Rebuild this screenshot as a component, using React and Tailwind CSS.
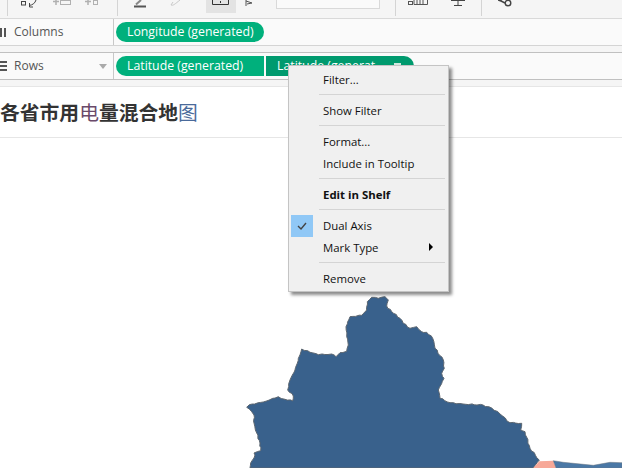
import React from "react";

const MAP_POINTS = [
  [250, 468], [250.7, 463], [254, 458], [255, 455], [254, 453], [260.7, 450.7], [260, 443], [256.7, 433], [254, 423], [254, 415],
  [251.7, 411.7], [246.7, 407.3], [249.3, 404.7], [263.3, 402], [278.3, 396.7], [285, 399.3], [292.7, 401], [293.3, 396], [287.7, 390], [290, 380],
  [295, 370], [301.7, 349], [310, 352.3], [318.3, 354.7], [331.7, 354], [336, 356.7], [340, 352.7], [346.7, 351.3], [348.3, 345], [346.7, 336.7],
  [346, 326.7], [350, 316.7], [361.7, 315.3], [366.7, 310], [367.3, 301.7], [371.7, 297.3], [378.3, 298.3], [385, 296.7], [388.3, 300], [386.7, 306],
  [391.7, 311.7], [400, 318.3], [403.3, 323.3], [410, 328.3], [416.7, 326.7], [421.7, 331.7], [426.7, 332.3], [432.7, 338.3], [435, 348.3], [443.3, 360],
  [444.3, 368.3], [441.7, 373.3], [444, 378.3], [438.3, 390], [440, 398.3], [450, 402.7], [463, 404], [483, 405], [491.7, 408], [500, 414],
  [510, 422.7], [521.7, 423.3], [520.7, 430], [525, 431.7], [530, 448.3], [539.3, 460], [533, 468],
];

// border on the map is rough, break long segments up with a small wobble
const roughen = (points) => {
  let d = `M${points[0][0]} ${points[0][1]}`;
  points.slice(1).forEach(([x, y], i) => {
    const [px, py] = points[i];
    const steps = Math.max(1, Math.round(Math.hypot(x - px, y - py) / 3));
    for (let s = 1; s <= steps; s++) {
      const wobble = s === steps ? 0 : Math.sin((i + 1) * 7.3 + s * 2.1) * 0.5;
      d += `L${(px + ((x - px) * s) / steps + wobble).toFixed(1)} ${(py + ((y - py) * s) / steps - wobble).toFixed(1)}`;
    }
  });
  return d + "Z";
};

const Pill = ({ children, className }) => (
  <div className={`flex h-5 w-[148px] items-center text-[12.3px] text-white ${className}`}>{children}</div>
);

const MenuItem = ({ label, bold, checked, submenu }) => (
  <div className={`relative flex h-[22px] items-center pl-[34px] text-[11.4px] text-[#111] ${bold ? "font-bold" : ""}`}>
    {checked && (
      <div className="absolute left-[2px] top-0 flex h-[22px] w-[22px] items-center justify-center bg-[#90c8f6]">
        <svg width="10" height="8" viewBox="0 0 10 8" fill="none" stroke="#444" strokeWidth="1.4">
          <path d="M1 4l3 3 5-6" />
        </svg>
      </div>
    )}
    {label}
    {submenu && <div className="absolute right-[15px] top-[6px] h-0 w-0 border-y-[4px] border-l-[4px] border-y-transparent border-l-black" />}
  </div>
);

const Separator = () => <div className="mb-[5px] ml-[30px] mr-[3px] mt-[3px] h-px bg-[#d4d4d4]" />;

const ToolbarDivider = ({ className }) => <div className={`h-4 w-px bg-[#d4d4d4] ${className}`} />;

export default function App() {
  return (
    <div className="relative h-[468px] w-[622px] overflow-hidden bg-white font-['Open_Sans',sans-serif]">
      {/* toolbar, cut off by the top edge */}
      <div className="flex h-[19px] overflow-hidden border-b border-[#d9d9d9] bg-[#f5f5f5]">
        <ToolbarDivider className="ml-[7px]" />
        <svg className="ml-[13px] shrink-0" width="16" height="9" viewBox="0 0 16 9" fill="none" stroke="#444">
          <rect x="0.5" y="1.5" width="4" height="3.5" />
          <path d="M15 0c-1 3-3 5-7 5.500M8.500 3v4h3.500" />
        </svg>
        <svg className="ml-[16px] shrink-0" width="18" height="6" viewBox="0 0 18 6" fill="none" stroke="#b0b0b0">
          <path d="M0 1.500h6M3 0v5" strokeWidth="1.500" />
          <rect x="7.500" y="0.500" width="10" height="4" />
        </svg>
        <svg className="ml-[14px] shrink-0" width="13" height="6" viewBox="0 0 13 6" fill="none" stroke="#b0b0b0">
          <path d="M0 1.500h6M3 0v5" strokeWidth="1.500" />
          <rect x="8.500" y="0.500" width="4" height="4" />
        </svg>
        <ToolbarDivider className="ml-[19px]" />
        <svg className="ml-[16px] shrink-0" width="13" height="8" viewBox="0 0 13 8" fill="none" stroke="#555">
          <path d="M2 4.500l5-4.500" strokeWidth="2" stroke="#888" />
          <path d="M0 6.500h12" strokeWidth="2" />
        </svg>
        <svg className="ml-[23px] shrink-0" width="11" height="6" viewBox="0 0 11 6" fill="none" stroke="#c8c8c8">
          <path d="M1 5c2 1 4-1 9-5M1 5l2-3" />
        </svg>
        <div className="ml-[25px] flex h-[13px] w-[30px] shrink-0 justify-center bg-[#e3e3e3]">
          <svg width="18" height="6" viewBox="0 0 18 6" fill="none" stroke="#333">
            <path d="M.5 0v4.500h16V0M8.500 1v2" />
          </svg>
        </div>
        <svg className="ml-[9px] shrink-0" width="8" height="6" viewBox="0 0 8 6" fill="none" stroke="#555">
          <path d="M1 6V0M1 1l6 2-5 1" />
        </svg>
        <div className="ml-[23px] h-[9px] w-[104px] shrink-0 border border-t-0 border-[#d9d9d9] bg-[#fafafa]" />
        <ToolbarDivider className="ml-[15px]" />
        <svg className="ml-[12px] shrink-0" width="20" height="6" viewBox="0 0 20 6" fill="none" stroke="#555">
          <rect x="0.500" y="1.500" width="4" height="3" />
          <path d="M6 0v4.500h13.500V0M9 0v4M12 0v4M15 0v4" />
        </svg>
        <svg className="ml-[23px] shrink-0" width="14" height="6" viewBox="0 0 14 6" fill="none" stroke="#444">
          <path d="M0 .500h14M7 0v5.500M3 5.500h8" />
        </svg>
        <ToolbarDivider className="ml-[16px]" />
        <svg className="ml-[16px] shrink-0" width="14" height="7" viewBox="0 0 14 7" fill="none" stroke="#444">
          <path d="M0 0l3 1M3 0v1l4 2" strokeWidth="1.500" />
          <circle cx="10" cy="3" r="2.800" strokeWidth="1.400" />
        </svg>
      </div>

      {/* columns shelf */}
      <div className="flex h-[27px] border-b border-[#d4d4d4] bg-[#fafafa]">
        <div className="flex w-[114px] items-center border-r border-[#c8c8c8] text-[12px] text-[#555]">
          <div className="flex w-[6px] gap-[2px]">
            <div className="h-[9px] w-[2px] bg-[#555]" />
            <div className="h-[9px] w-[2px] bg-[#555]" />
          </div>
          <span className="ml-[8px]">Columns</span>
        </div>
        <div className="flex items-center pl-[2px]">
          <Pill className="rounded-full bg-[#00b07c] pl-[11px]">Longitude (generated)</Pill>
        </div>
      </div>

      <div className="h-[6px] bg-[#f5f5f5]" />

      {/* rows shelf */}
      <div className="flex h-[28px] border-y border-[#c0c0c0] bg-[#fafafa]">
        <div className="relative flex w-[114px] items-center border-r border-[#c8c8c8] text-[12px] text-[#555]">
          <div className="flex w-[7px] flex-col gap-[2px]">
            <div className="h-[2px] bg-[#555]" />
            <div className="h-[2px] bg-[#555]" />
            <div className="h-[2px] bg-[#555]" />
          </div>
          <span className="ml-[7px]">Rows</span>
          <div className="absolute right-[6px] top-[11px] h-0 w-0 border-x-[4px] border-t-[5px] border-x-transparent border-t-[#aaa]" />
        </div>
        <div className="flex items-center gap-[2px] pl-[2px]">
          <Pill className="rounded-l-full bg-[#00b07c] pl-[11px]">Latitude (generated)</Pill>
          <Pill className="relative rounded-r-full bg-[#009a6e] pl-[11px] whitespace-nowrap">
            Latitude (generat
            <div className="absolute left-[128px] top-[7px] h-[2px] w-[7px] bg-[#cfe9df]" />
          </Pill>
        </div>
      </div>

      <div className="h-[6px] bg-[#f5f5f5]" />

      {/* sheet title */}
      <div className="flex h-[52px] items-center whitespace-nowrap border-y border-[#e6e6e6] bg-white font-['Noto_Sans_CJK_SC',sans-serif] text-[19.8px] font-bold text-[#333]">
        各省市用<span className="font-normal text-[#6a4a6a]">电</span>量混合地<span className="font-normal text-[#4a6a9a]">图</span>
      </div>

      {/* map */}
      <svg className="block" width="622" height="330" viewBox="0 138 622 330">
        <path d={roughen(MAP_POINTS)} fill="#39618c" stroke="#5c6670" strokeWidth="1" strokeLinejoin="round" />
        <path d="M533.3 468L539.3 461.3L553.3 460.7L556 468Z" fill="#f7a898" />
        <path d="M553.3 460.7L563.3 462.3L593.3 465.3L610 462.3L622 462.7V468H556Z" fill="#4a78a6" stroke="#6d7780" strokeWidth="0.5" />
      </svg>

      {/* context menu */}
      <div className="absolute left-[288px] top-[65px] h-[227px] w-[161px] border border-[#c4c4c4] bg-[#f0f0f0] py-[3px] shadow-[3px_3px_3px_rgba(0,0,0,0.45)]">
        <MenuItem label="Filter..." />
        <Separator />
        <MenuItem label="Show Filter" />
        <Separator />
        <MenuItem label="Format..." />
        <MenuItem label="Include in Tooltip" />
        <Separator />
        <MenuItem label="Edit in Shelf" bold />
        <Separator />
        <MenuItem label="Dual Axis" checked />
        <MenuItem label="Mark Type" submenu />
        <Separator />
        <MenuItem label="Remove" />
      </div>
    </div>
  );
}
